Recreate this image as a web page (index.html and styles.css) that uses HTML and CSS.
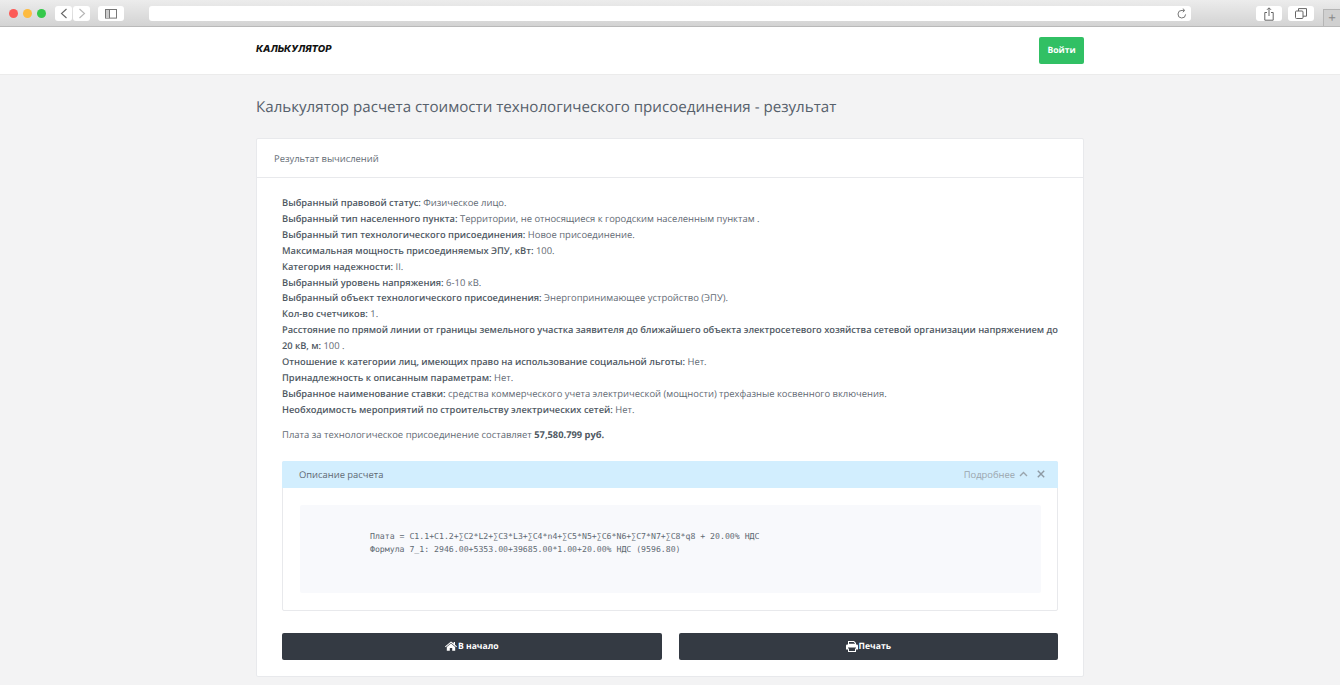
FILE: index.html
```html
<!DOCTYPE html>
<html lang="ru">
<head>
<meta charset="utf-8">
<title>Калькулятор</title>
<link rel="stylesheet" href="styles.css">
</head>
<body>
<div class="chrome">
  <div class="lights"><i class="l red"></i><i class="l yellow"></i><i class="l green"></i></div>
  <div class="navs">
    <span class="cbtn nav"><svg width="8" height="11" viewBox="0 0 8 11"><path d="M6.500 1 1.500 5.500l5 4.500" fill="none" stroke="#666" stroke-width="1.100"/></svg></span>
    <span class="cbtn nav"><svg width="8" height="11" viewBox="0 0 8 11"><path d="M1.500 1l5 4.500-5 4.500" fill="none" stroke="#b5b5b5" stroke-width="1.100"/></svg></span>
  </div>
  <span class="cbtn side"><svg width="12" height="10" viewBox="0 0 12 10"><rect x=".5" y=".5" width="11" height="8.600" fill="none" stroke="#777"/><path d="M4.500 .5v8.600" stroke="#777"/><rect x="1" y="1" width="3" height="7.600" fill="#ccc"/></svg></span>
  <div class="url"><svg width="10" height="11" viewBox="0 0 10 11"><path d="M8.600 6.400A3.800 3.800 0 1 1 5 2.400h2" fill="none" stroke="#777"/><path d="M5.800.6 7.800 2.400 5.800 4.200" fill="none" stroke="#777"/></svg></div>
  <span class="cbtn act"><svg width="10" height="14" viewBox="0 0 10 14"><path d="M3 5.500H.8v7.700h8.400V5.500H7M5 9V1M3 2.800 5 .8l2 2" fill="none" stroke="#666"/></svg></span>
  <span class="cbtn act act2"><svg width="12" height="11" viewBox="0 0 12 11"><rect x=".5" y="3" width="7.500" height="7.500" rx="1" fill="none" stroke="#666"/><path d="M3.500 3V.6h8v7.600H8" fill="none" stroke="#666"/></svg></span>
  <span class="newtab">+</span>
</div>

<header class="topbar">
  <div class="wrap topbar-in">
    <span class="logo">КАЛЬКУЛЯТОР</span>
    <a class="login">Войти</a>
  </div>
</header>

<main class="wrap">
  <h1 class="title">Калькулятор расчета стоимости технологического присоединения - результат</h1>
  <section class="card">
    <div class="card-head">Результат вычислений</div>
    <div class="card-body">
      <ul class="facts">
        <li><b>Выбранный правовой статус:</b> Физическое лицо.</li>
        <li><b>Выбранный тип населенного пункта:</b> Территории, не относящиеся к городским населенным пунктам .</li>
        <li><b>Выбранный тип технологического присоединения:</b> Новое присоединение.</li>
        <li><b>Максимальная мощность присоединяемых ЭПУ, кВт:</b> 100.</li>
        <li><b>Категория надежности:</b> II.</li>
        <li><b>Выбранный уровень напряжения:</b> 6-10 кВ.</li>
        <li><b>Выбранный объект технологического присоединения:</b> Энергопринимающее устройство (ЭПУ).</li>
        <li><b>Кол-во счетчиков:</b> 1.</li>
        <li class="tight"><b>Расстояние по прямой линии от границы земельного участка заявителя до ближайшего объекта электросетевого хозяйства сетевой организации напряжением до 20 кВ, м:</b> 100 .</li>
        <li class="tight"><b>Отношение к категории лиц, имеющих право на использование социальной льготы:</b> Нет.</li>
        <li><b>Принадлежность к описанным параметрам:</b> Нет.</li>
        <li><b>Выбранное наименование ставки:</b> средства коммерческого учета электрической (мощности) трехфазные косвенного включения.</li>
        <li><b>Необходимость мероприятий по строительству электрических сетей:</b> Нет.</li>
      </ul>
      <p class="total">Плата за технологическое присоединение составляет <b>57,580.799 руб.</b></p>
      <div class="panel">
        <div class="panel-head">
          <span>Описание расчета</span>
          <span class="panel-tools">Подробнее
            <svg class="chev" width="9" height="6" viewBox="0 0 9 6"><path d="M1 5 4.500 1.500 8 5" fill="none" stroke="#9aa5ad" stroke-width="1.400"/></svg>
            <svg class="close" width="8" height="8" viewBox="0 0 8 8"><path d="M.8.8l6.400 6.400M7.200.8.8 7.200" fill="none" stroke="#8d99a3" stroke-width="1.400"/></svg>
          </span>
        </div>
        <div class="panel-body">
          <pre class="formula">Плата = C1.1+C1.2+∑C2*L2+∑C3*L3+∑C4*n4+∑C5*N5+∑C6*N6+∑C7*N7+∑C8*q8 + 20.00% НДС
Формула 7_1: 2946.00+5353.00+39685.00*1.00+20.00% НДС (9596.80)</pre>
        </div>
      </div>
      <div class="actions">
        <a class="dark"><svg width="12" height="10" viewBox="0 0 12 10"><path d="M6 .4 0 5.400l.6.8L6 1.800l5.400 4.400.6-.8-2-1.700V1H8.700v1.500ZM1.800 6v3.800h3V7h2.400v2.800h3V6L6 2.600Z" fill="#fff"/></svg>В начало</a>
        <a class="dark"><svg width="12" height="11" viewBox="0 0 12 11"><path d="M2 3.500V0h6l2 2v1.500ZM3 2.800h6V2.400L7.600 1H3ZM0 8.500V4.800Q0 3.500 1.300 3.500h9.400Q12 3.500 12 4.800v3.700H10V6.500H2v2ZM3 7.500h6V10H3Zm-1 0V11h8V7.500Z" fill="#fff" fill-rule="evenodd"/></svg>Печать</a>
      </div>
    </div>
  </section>
</main>
</body>
</html>
```

FILE: styles.css
```css
* { box-sizing: border-box; }
html, body { margin: 0; padding: 0; }
body {
  width: 1340px;
  height: 685px;
  overflow: hidden;
  background: #f3f3f4;
  font-family: "Open Sans", "Noto Sans", sans-serif;
  font-size: 9.4px;
  color: #5f6973;
  text-rendering: geometricPrecision;
}
.chrome {
  height: 27px;
  display: flex;
  align-items: flex-start;
  padding-top: 6px;
  background: linear-gradient(#ececec, #d3d3d3);
  border-bottom: 1px solid #b9b9b9;
}
.lights { display: flex; gap: 5px; margin-left: 9px; margin-top: 3px; }
.l { display: block; width: 9px; height: 9px; border-radius: 50%; }
.red { background: #fc5b57; }
.yellow { background: #fdbb40; }
.green { background: #34c84a; }
.cbtn {
  display: flex;
  align-items: center;
  justify-content: center;
  height: 15px;
  background: #fff;
  border-radius: 3px;
}
.navs { display: flex; gap: 1px; margin-left: 9px; }
.nav { width: 17px; }
.side { width: 26px; margin-left: 8px; }
.url {
  width: 1042px;
  height: 15px;
  margin-left: 25px;
  padding-right: 4px;
  display: flex;
  align-items: center;
  justify-content: flex-end;
  background: #fff;
  border-radius: 3px;
}
.act { width: 26px; margin-left: 65px; }
.act2 { margin-left: 6px; }
.newtab {
  flex: 1;
  height: 17px;
  margin-left: 9px;
  margin-top: 3px;
  background: #d0d0d0;
  border: 1px solid #b5b5b5;
  border-right: 0;
  border-bottom: 0;
  color: #888;
  font: 13px/15px "Liberation Sans", sans-serif;
  text-align: center;
}
.wrap { width: 828px; margin-left: 256px; }
.topbar { height: 48px; background: #fff; border-bottom: 1px solid #ebebeb; }
.topbar-in { height: 47px; display: flex; align-items: center; justify-content: space-between; }
.logo {
  margin-top: -2px;
  font-family: "Inter", "Open Sans", sans-serif;
  font-size: 9.6px;
  font-weight: 800;
  font-style: italic;
  color: #111;
}
.login {
  width: 45px;
  height: 27px;
  margin-top: -1px;
  display: flex;
  align-items: center;
  justify-content: center;
  background: #31c064;
  border-radius: 2px;
  color: #fff;
  font-size: 8.6px;
  font-weight: 700;
}
.title {
  margin: 21px 0 20px;
  font-size: 15.14px;
  line-height: 22px;
  font-weight: 400;
  color: #56606b;
}
.card {
  height: 539px;
  background: #fff;
  border: 1px solid #e8e9ec;
  border-radius: 2px;
}
.card-head {
  height: 39px;
  padding-left: 17px;
  display: flex;
  align-items: center;
  border-bottom: 1px solid #e8e9ec;
  color: #636c75;
}
.card-body { padding: 17px 25px 0; }
.facts { margin: 0; padding: 0; list-style: none; }
.facts li { font-size: 9.43px; line-height: 15.9px; }
.facts .tight { letter-spacing: -.03px; }
.facts b { font-size: 9.3px; font-weight: 600; color: #4f5963; }
.total { margin: 9px 0 0; font-size: 9.47px; line-height: 16px; }
.total b { font-size: 9.3px; font-weight: 700; color: #4f5963; }
.panel {
  margin-top: 18px;
  height: 150px;
  border: 1px solid #e8e9ec;
  border-radius: 2px;
}
.panel-head {
  height: 27px;
  margin: -1px -1px 0;
  padding: 0 13px 0 17px;
  display: flex;
  align-items: center;
  justify-content: space-between;
  background: #d2eefe;
  border-radius: 2px 2px 0 0;
}
.panel-tools { display: flex; align-items: center; color: #9aa5ad; }
.chev { margin-left: 4px; }
.close { margin-left: 9px; }
.panel-body { padding: 17px 16px 0 17px; }
.formula {
  height: 88px;
  margin: 0;
  padding: 25px 0 0 70px;
  background: #f8f9fc;
  border-radius: 2px;
  font-family: "DejaVu Sans Mono", monospace;
  font-size: 8.2px;
  line-height: 13px;
  color: #5f6973;
}
.actions { margin-top: 22px; display: flex; gap: 17px; }
.dark {
  flex: 1;
  height: 27px;
  display: flex;
  align-items: center;
  justify-content: center;
  gap: 1px;
  background: #343a43;
  border-radius: 2px;
  color: #fff;
  font-size: 8.6px;
  font-weight: 700;
}
```
